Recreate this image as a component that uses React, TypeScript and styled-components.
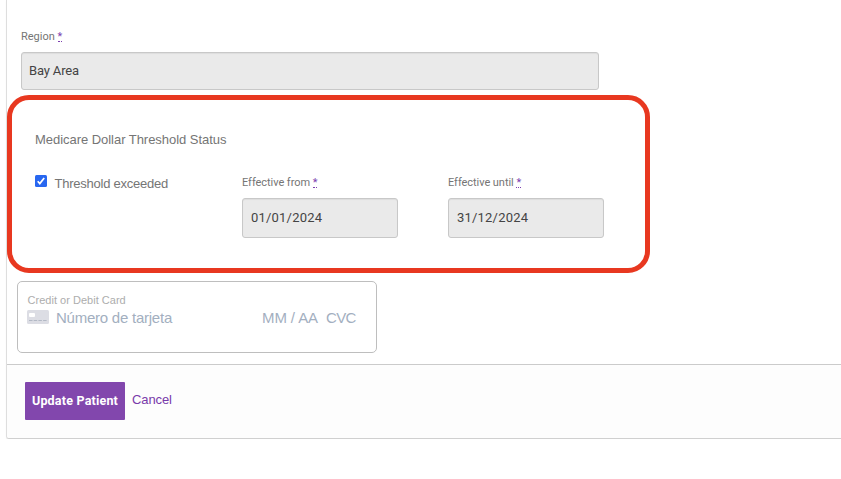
import React from 'react';
import styled, { createGlobalStyle } from 'styled-components';

const GlobalStyle = createGlobalStyle`
  * { box-sizing: border-box; }
  body { margin: 0; background: #fff; font-family: Roboto, sans-serif; color: #757575; overflow: hidden; }
`;

const Panel = styled.form`
  margin: 0 -10px 0 6px;
  height: 439px;
  display: flex;
  flex-direction: column;
  border: 1px solid #d0d0d0;
  border-top: 0;
  border-left-color: #dedede;
  border-radius: 0 0 3px 3px;
  box-shadow: 0 1px 1px rgba(0, 0, 0, 0.08);
`;

const FormBody = styled.div`
  height: 364px;
  padding-top: 30px;
`;

const Field = styled.label<{ $width: number }>`
  display: block;
  width: ${p => p.$width}px;
`;

const RegionRow = styled.div`
  padding-left: 14px;
`;

const LabelText = styled.span<{ $spacing: number }>`
  display: block;
  height: 14px;
  font-size: 11px;
  line-height: 14px;
  letter-spacing: ${p => p.$spacing}px;
  white-space: nowrap;
`;

const Required = styled.abbr`
  color: #7d3fb0;
  text-decoration: none;
  display: inline-block;
  height: 12px;
  line-height: 14px;
  vertical-align: top;
  border-bottom: 1px dotted #7d3fb0;
`;

const Input = styled.input<{ $height: number; $spacing: number; $inset: number }>`
  display: block;
  width: 100%;
  height: ${p => p.$height}px;
  margin: 8px 0 0;
  padding: 0 8px 1px ${p => p.$inset}px;
  border: 1px solid #c8c8c8;
  border-radius: 3px;
  background: #eaeaea;
  color: #444;
  font: 13px Roboto, sans-serif;
  letter-spacing: ${p => p.$spacing}px;
  box-shadow: inset 0 1px 1px rgba(0, 0, 0, 0.06);
  outline: none;
`;

const Threshold = styled.section`
  width: 643px;
  height: 178px;
  margin-top: 5px;
  padding: 32px 0 0 23px;
  border: 5px solid #e83820;
  border-radius: 22px;
`;

const SectionTitle = styled.h2`
  margin: 0;
  height: 16px;
  font: 400 13px/16px 'Liberation Sans', sans-serif;
  letter-spacing: -0.04px;
`;

const ThresholdRow = styled.div`
  display: grid;
  grid-template-columns: 207px 206px 156px;
  margin-top: 28px;
`;

const CheckLabel = styled.label`
  display: flex;
  height: 18px;
  margin-top: -1px;
  font: 13px/18px 'Liberation Sans', sans-serif;
  letter-spacing: -0.24px;
`;

const CheckIcon = styled.svg`
  margin: 0 7.5px 0 0;
  flex: none;
`;

const CardBox = styled.section`
  width: 360px;
  height: 72px;
  margin: 8px 0 0 10px;
  padding: 11px 20px 0 9px;
  border: 1px solid #bebebe;
  border-radius: 5px;
`;

const CardTitle = styled.div`
  height: 14px;
  padding-left: 0.5px;
  font: 11px/14px 'Liberation Sans', sans-serif;
  letter-spacing: 0.02px;
  color: #adadad;
`;

const CardLine = styled.div`
  display: flex;
  align-items: flex-start;
  font: 15px/22px 'Liberation Sans', sans-serif;
  color: #a3afbf;
`;

const CardIcon = styled.svg`
  flex: none;
  margin-top: 3px;
`;

const CardNumber = styled.span`
  margin-left: 7px;
  width: 206px;
  letter-spacing: -0.24px;
`;

const Expiry = styled.span`
  width: 64px;
  white-space: nowrap;
  letter-spacing: -0.1px;
`;

const Cvc = styled.span`
  letter-spacing: -0.7px;
`;

const Footer = styled.footer`
  flex: 1;
  display: flex;
  align-items: flex-start;
  gap: 7px;
  padding: 17px 0 0 18px;
  border-top: 1px solid #cbcbcb;
  background: #fdfdfd;
  border-radius: 0 0 3px 3px;
`;

const SubmitButton = styled.button`
  width: 100px;
  height: 38px;
  padding: 0 0 1px;
  border: 0;
  border-radius: 1px;
  background: #8247ad;
  color: #fff;
  font: 700 12.5px Roboto, sans-serif;
  letter-spacing: 0.2px;
  white-space: nowrap;
`;

const CancelLink = styled.a`
  margin-top: 9px;
  font: 13px/18px 'Liberation Sans', sans-serif;
  letter-spacing: -0.1px;
  color: #793aaa;
`;

type DateFieldProps = { label: string; value: string };

function DateField({ label, value }: DateFieldProps) {
  return (
    <Field $width={156}>
      <LabelText $spacing={-0.05}>{label} <Required>*</Required></LabelText>
      <Input $height={40} $spacing={0.2} $inset={8} value={value} readOnly />
    </Field>
  );
}

export default function App() {
  return (
    <>
      <GlobalStyle />
      <Panel>
        <FormBody>
          <RegionRow>
            <Field $width={578}>
              <LabelText $spacing={0}>Region <Required>*</Required></LabelText>
              <Input $height={38} $spacing={-0.15} $inset={7} value="Bay Area" readOnly />
            </Field>
          </RegionRow>
          <Threshold>
            <SectionTitle>Medicare Dollar Threshold Status</SectionTitle>
            <ThresholdRow>
              <CheckLabel>
                <CheckIcon width="12" height="12" viewBox="0 0 12 12">
                  <rect width="12" height="12" rx="1.5" fill="#2867f0" />
                  <path d="M2.7 6.3 4.8 8.6 9.2 3" fill="none" stroke="#fff" strokeWidth="1.7" />
                </CheckIcon>
                Threshold exceeded
              </CheckLabel>
              <DateField label="Effective from" value="01/01/2024" />
              <DateField label="Effective until" value="31/12/2024" />
            </ThresholdRow>
          </Threshold>
          <CardBox>
            <CardTitle>Credit or Debit Card</CardTitle>
            <CardLine>
              <CardIcon width="22" height="14" viewBox="0 0 22 14">
                <rect width="22" height="14" rx="1.5" fill="#dcdde4" />
                <rect x="2" y="3" width="6" height="4" rx="1" fill="#fff" />
                <path d="M2 10.5h18" stroke="#b3b9c5" strokeDasharray="3.5 1.2" />
              </CardIcon>
              <CardNumber>Número de tarjeta</CardNumber>
              <Expiry>MM / AA</Expiry>
              <Cvc>CVC</Cvc>
            </CardLine>
          </CardBox>
        </FormBody>
        <Footer>
          <SubmitButton type="button">Update Patient</SubmitButton>
          <CancelLink>Cancel</CancelLink>
        </Footer>
      </Panel>
    </>
  );
}
